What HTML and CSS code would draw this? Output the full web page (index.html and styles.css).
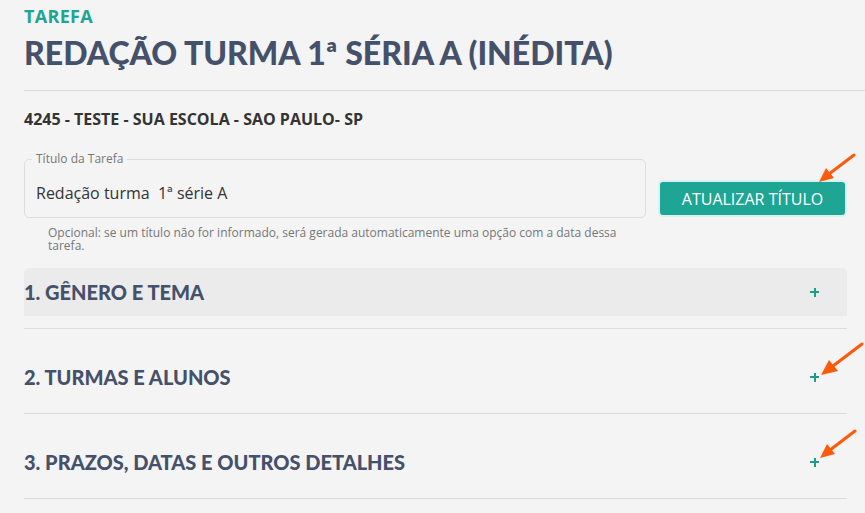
FILE: index.html
```html
<!DOCTYPE html>
<html>
<head>
  <title>Tarefa - Redação turma 1ª série A</title>
  <link rel="stylesheet" href="styles.css">
</head>
<body>
  <div class="page">
    <div class="page-header">
      <div class="kicker">TAREFA</div>
      <h1>REDAÇÃO TURMA 1ª SÉRIA A (INÉDITA)</h1>
    </div>

    <div class="school">4245 - TESTE - SUA ESCOLA - SAO PAULO- SP</div>

    <div class="title-row">
      <div class="title-field">
        <fieldset class="field">
          <legend>Título da Tarefa</legend>
          <input type="text" value="Redação turma  1ª série A">
        </fieldset>
        <p class="hint">Opcional: se um título não for informado, será gerada automaticamente uma opção com a data dessa tarefa.</p>
      </div>
      <button class="btn">ATUALIZAR TÍTULO</button>
    </div>

    <div class="sections">
      <div class="section">
        <div class="section-head active">
          <span>1. GÊNERO E TEMA</span>
          <span class="plus"></span>
        </div>
      </div>
      <div class="section">
        <div class="section-head">
          <span>2. TURMAS E ALUNOS</span>
          <span class="plus"></span>
        </div>
      </div>
      <div class="section">
        <div class="section-head">
          <span>3. PRAZOS, DATAS E OUTROS DETALHES</span>
          <span class="plus"></span>
        </div>
      </div>
    </div>
  </div>

  <!-- annotation arrows -->
  <svg class="arrow arrow-1" width="40" height="32" viewBox="0 0 40 32"><line x1="37" y1="2" x2="12" y2="21" /><polygon points="2,29 9,15 17,25" /></svg>
  <svg class="arrow arrow-2" width="46" height="36" viewBox="0 0 46 36"><line x1="43" y1="2" x2="14" y2="24" /><polygon points="2,33 10,18 19,29" /></svg>
  <svg class="arrow arrow-3" width="40" height="32" viewBox="0 0 40 32"><line x1="37" y1="2" x2="12" y2="21" /><polygon points="2,29 9,15 17,25" /></svg>
</body>
</html>
```

FILE: styles.css
```css
html, body { margin: 0; }
body { background: #f4f4f4; font-family: "Open Sans", Arial, sans-serif; color: #333; overflow: hidden; }

.page { padding: 5px 18px 0 24px; }

.page-header { margin-right: -18px; border-bottom: 1px solid #dcdcdc; padding-bottom: 17px; }
.kicker { color: #20a593; font-weight: 700; font-size: 18px; line-height: 22px; letter-spacing: 0.3px; }
h1 { margin: 6px 0 0; font-family: Lato, "Open Sans", sans-serif; font-weight: 900; font-size: 32px; line-height: 40px; color: #45516a; letter-spacing: 0; }

.school { margin-top: 18px; font-weight: 700; font-size: 16px; line-height: 20px; color: #333; }

.title-row { display: flex; align-items: flex-start; margin-top: 23px; }
.title-field { width: 622px; }
.field { margin: 0; padding: 0 11px; border: 1px solid #dedede; border-radius: 5px; height: 64px; }
.field legend { padding: 0 4px; margin-left: -4px; font-size: 12px; line-height: 14px; color: #777; }
.field input { border: none; background: transparent; padding: 0; margin-top: 16px; width: 100%; font-family: "Open Sans", sans-serif; font-size: 16px; color: #333; outline: none; }
.hint { margin: 8px 0 0 24px; font-size: 12px; line-height: 13px; color: #777; }

.btn { margin: 30px 0 0 14px; width: 185px; height: 33px; border: none; border-radius: 3px; background: #1fa593; color: #fff; font-family: "Open Sans", sans-serif; font-size: 16px; box-shadow: 0 0 0 2px #d6f3ef; cursor: pointer; }

.sections { margin-top: 16px; width: 823px; }
.section { border-bottom: 1px solid #dcdcdc; padding-bottom: 12px; }
.section + .section { padding-top: 24px; }
.section-head { height: 48px; display: flex; align-items: center; justify-content: space-between; padding-right: 28px; font-family: Lato, "Open Sans", sans-serif; font-weight: 900; font-size: 20px; color: #45516a; }
.section-head.active { background: #ebebeb; border-radius: 5px 5px 0 0; }

.plus { position: relative; width: 9px; height: 9px; }
.plus::before, .plus::after { content: ""; position: absolute; background: #1f9d8c; }
.plus::before { left: 0; top: 3.5px; width: 9px; height: 2px; }
.plus::after { left: 3.5px; top: 0; width: 2px; height: 9px; }

.arrow { position: absolute; }
.arrow line { stroke: #ff5a0a; stroke-width: 3; stroke-linecap: round; }
.arrow polygon { fill: #ff5a0a; }
.arrow-1 { left: 817px; top: 153px; }
.arrow-2 { left: 819px; top: 342px; }
.arrow-3 { left: 818px; top: 429px; }
```
